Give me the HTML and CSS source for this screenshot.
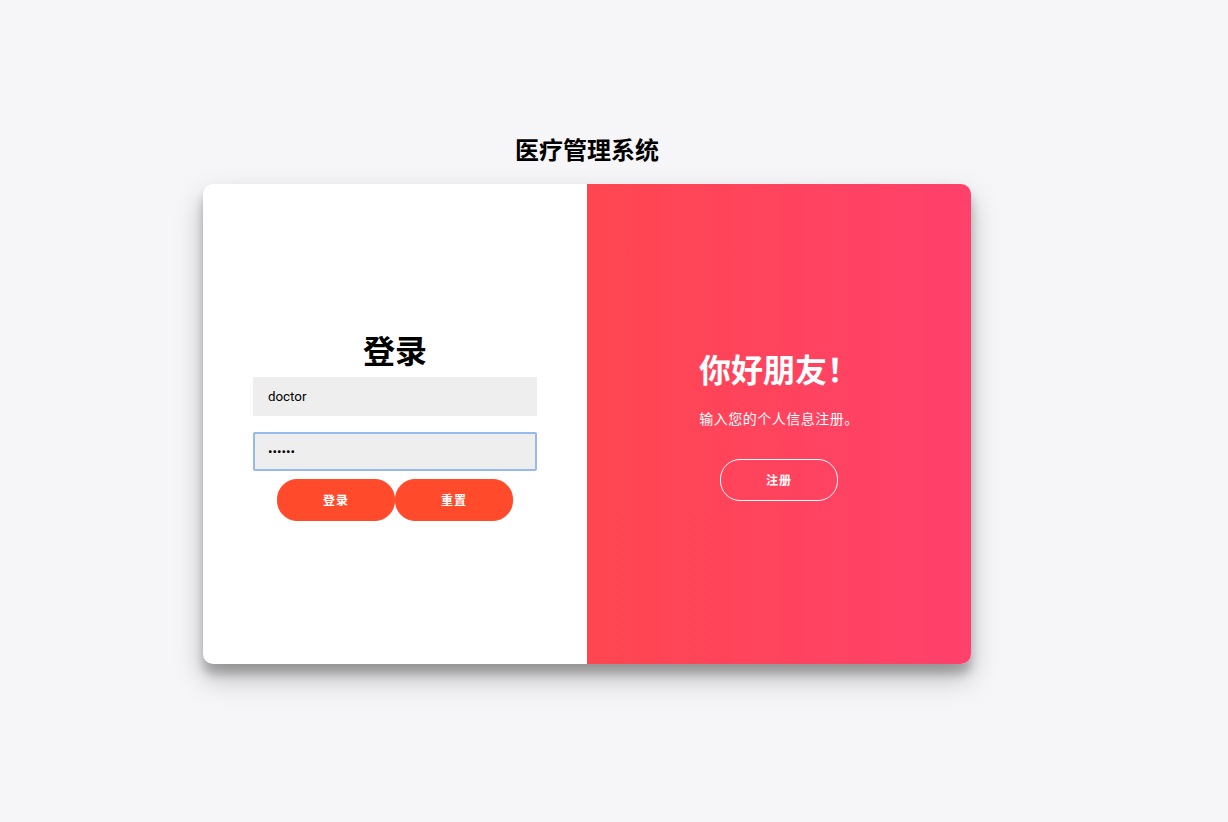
FILE: index.html
```html
<!DOCTYPE html>
<html lang="zh-CN">
<head>
<meta charset="utf-8">
<title>医疗管理系统</title>
<link rel="stylesheet" href="styles.css">
</head>
<body>
<div class="page">
  <h2 class="title">医疗管理系统</h2>
  <div class="container">
    <form class="form" onsubmit="return false">
      <h1 class="form-title">登录</h1>
      <input class="field" type="text" value="doctor">
      <input class="field field-focus" type="password" value="123456">
      <div class="actions">
        <button class="btn" type="button">登录</button>
        <button class="btn" type="button">重置</button>
      </div>
    </form>
    <div class="overlay">
      <h1 class="overlay-title">你好朋友！</h1>
      <p class="overlay-text">输入您的个人信息注册。</p>
      <button class="btn btn-ghost" type="button">注册</button>
    </div>
  </div>
</div>
</body>
</html>
```
FILE: styles.css
```css
* { box-sizing: border-box; }
html, body { margin: 0; padding: 0; }
body {
  background: #f6f5f7;
  font-family: "Liberation Sans", "Noto Sans CJK SC", sans-serif;
  height: 822px;
  overflow: hidden;
}
.page {
  width: 1174px;
  display: flex;
  flex-direction: column;
  align-items: center;
  padding-top: 136px;
}
.title {
  margin: 0 0 19px;
  font-size: 24px;
  line-height: 29px;
  font-weight: bold;
  color: #000;
}
.container {
  width: 768px;
  height: 480px;
  background: #fff;
  border-radius: 10px;
  box-shadow: 0 14px 28px rgba(0,0,0,0.25), 0 10px 10px rgba(0,0,0,0.22);
  display: grid;
  grid-template-columns: 384px 384px;
  overflow: hidden;
}
.form {
  display: flex;
  flex-direction: column;
  align-items: center;
  justify-content: center;
  padding: 0 50px;
  margin: 0;
  height: 100%;
  text-align: center;
}
.form-title {
  margin: 0;
  padding-top: 8px;
  font-size: 32px;
  line-height: 34px;
  font-weight: bold;
  color: #000;
}
.field {
  display: block;
  width: 100%;
  height: 39px;
  background: #eee;
  border: none;
  padding: 12px 15px;
  margin: 8px 0;
  font-family: "Roboto", "Liberation Sans", "Noto Sans CJK SC", sans-serif;
  font-size: 13.33px;
  color: #000;
  outline: none;
}
.field-focus {
  box-shadow: inset 0 0 0 2px #98b8f0;
  border-radius: 2px;
}
.actions {
  display: flex;
}
.btn {
  border-radius: 20px;
  border: 1px solid #ff4b2b;
  background: #ff4b2b;
  color: #fff;
  font-family: "Liberation Sans", "Noto Sans CJK SC", sans-serif;
  font-size: 12px;
  line-height: 16px;
  font-weight: bold;
  letter-spacing: 1px;
  padding: 13px 45px 11px;
  height: 42px;
  width: 118px;
  cursor: pointer;
}
.overlay {
  background: linear-gradient(to right, #ff4650, #ff416c);
  color: #fff;
  display: flex;
  flex-direction: column;
  align-items: center;
  justify-content: center;
  padding: 0 40px;
  text-align: center;
  height: 100%;
}
.overlay-title {
  margin: 0;
  padding-top: 6px;
  font-size: 32px;
  line-height: 36px;
  font-weight: bold;
}
.overlay-text {
  margin: 20px 0 30px;
  font-size: 14px;
  line-height: 20px;
  letter-spacing: 0.5px;
}
.btn-ghost {
  background: transparent;
  border-color: #fff;
}
```
